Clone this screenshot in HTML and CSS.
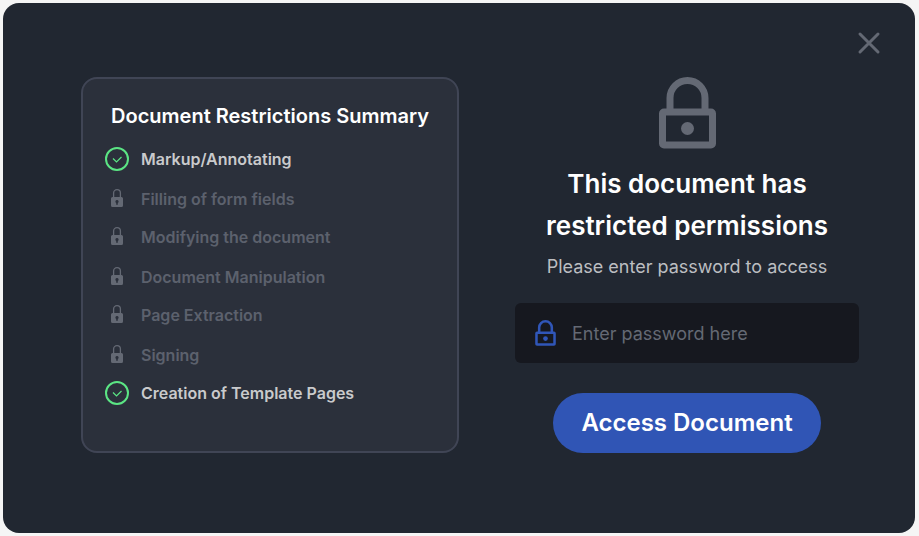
FILE: index.html
```html
<!DOCTYPE html>
<html lang="en">
<head>
<meta charset="utf-8">
<meta name="viewport" content="width=device-width, initial-scale=1">
<title>Document permissions</title>
<link rel="stylesheet" href="styles.css">
</head>
<body>
<svg class="sprite" aria-hidden="true">
    <symbol id="check" viewBox="0 0 24 24">
        <circle cx="12" cy="12" r="11" fill="none" stroke="currentColor" stroke-width="2"/>
        <path d="M8 11.500l3.500 3.500 5-5" fill="none" stroke="currentColor" stroke-width="1.2"/>
    </symbol>
    <symbol id="locked" viewBox="0 0 24 24">
        <path d="M8.600 11V6a3.400 3.400 0 0 1 6.800 0V11" fill="none" stroke="currentColor" stroke-width="1.3"/>
        <path fill="currentColor" fill-rule="evenodd" d="M7.500 10h9a1.500 1.500 0 0 1 1.500 1.500v7a1.500 1.500 0 0 1-1.500 1.500h-9a1.500 1.500 0 0 1-1.500-1.500v-7a1.500 1.500 0 0 1 1.500-1.500zM12 13a1.600 1.600 0 0 0-.8 3v1.700h1.600V16a1.600 1.600 0 0 0-.8-3z"/>
    </symbol>
    <symbol id="padlock" viewBox="0 0 57 72">
        <path d="M11 34V21a17.500 17.500 0 0 1 35 0v13" fill="none" stroke="currentColor" stroke-width="7"/>
        <rect x="3.500" y="35" width="50" height="33" rx="1.500" fill="none" stroke="currentColor" stroke-width="7"/>
        <circle cx="28.500" cy="51.500" r="6.500" fill="currentColor"/>
    </symbol>
</svg>

<div class="modal">
    <button class="close" type="button" aria-label="Close">
        <svg viewBox="0 0 24 24"><path d="M3 3l18 18M21 3L3 21"/></svg>
    </button>

    <section class="summary">
        <h2>Document Restrictions Summary</h2>
        <ul>
            <li class="allowed"><svg><use href="#check"/></svg><span>Markup/Annotating</span></li>
            <li><svg><use href="#locked"/></svg><span>Filling of form fields</span></li>
            <li><svg><use href="#locked"/></svg><span>Modifying the document</span></li>
            <li><svg><use href="#locked"/></svg><span>Document Manipulation</span></li>
            <li><svg><use href="#locked"/></svg><span>Page Extraction</span></li>
            <li><svg><use href="#locked"/></svg><span>Signing</span></li>
            <li class="allowed"><svg><use href="#check"/></svg><span>Creation of Template Pages</span></li>
        </ul>
    </section>

    <form class="access">
        <svg class="lock"><use href="#padlock"/></svg>
        <h1>This document has restricted permissions</h1>
        <p>Please enter password to access</p>
        <label class="field">
            <svg><use href="#padlock"/></svg>
            <input type="password" placeholder="Enter password here" aria-label="Password">
        </label>
        <button class="submit" type="submit">Access Document</button>
    </form>
</div>
</body>
</html>
```
FILE: styles.css
```css
* {
    box-sizing: border-box;
    margin: 0;
    padding: 0;
}

body {
    min-height: 100vh;
    padding: 3px 4px 3px 3px;
    display: flex;
    background: #f5f5f5;
    font-family: Inter, "Liberation Sans", sans-serif;
    color: #fff;
}

.sprite {
    position: absolute;
    width: 0;
    height: 0;
}

.modal {
    position: relative;
    flex: 1;
    display: grid;
    grid-template-columns: minmax(0, 378fr) minmax(0, 344fr);
    gap: 56px;
    align-items: center;
    padding: 74px 56px 80px 78px;
    border-radius: 16px;
    background: #212731;
}

.close {
    position: absolute;
    top: 28px;
    right: 34px;
    width: 24px;
    height: 24px;
    border: none;
    background: none;
    cursor: pointer;
}

.close svg {
    display: block;
    fill: none;
    stroke: #646974;
    stroke-width: 3;
    stroke-linecap: round;
}

.summary {
    align-self: stretch;
    padding: 22px;
    border: 2px solid #404555;
    border-radius: 16px;
    background: #2b303b;
}

.summary h2 {
    margin-bottom: 16px;
    font-size: 20px;
    font-weight: 600;
    line-height: 30px;
    text-align: center;
}

.summary ul {
    list-style: none;
}

.summary li {
    display: flex;
    align-items: center;
    gap: 12px;
    height: 24px;
    margin-bottom: 16px;
    color: #5c616d;
    font-size: 16px;
    font-weight: 600;
}

.summary li:nth-child(even) {
    margin-bottom: 14px;
}

.summary li svg {
    flex: none;
    width: 24px;
    height: 24px;
    color: #646974;
}

.summary .allowed {
    color: #c9cacc;
}

.summary .allowed svg {
    color: #5be584;
}

.access {
    display: flex;
    flex-direction: column;
    align-items: center;
    text-align: center;
}

.access .lock {
    width: 57px;
    height: 72px;
    color: #646974;
}

.access h1 {
    max-width: 300px;
    margin-top: 14px;
    font-size: 26px;
    font-weight: 600;
    line-height: 42px;
}

.access p {
    margin: 6px 0 22px;
    color: #bcbec1;
    font-size: 18px;
    line-height: 28px;
}

.field {
    align-self: stretch;
    display: flex;
    align-items: center;
    gap: 16px;
    height: 60px;
    padding: 0 20px;
    border-radius: 6px;
    background: #16181f;
}

.field svg {
    flex: none;
    width: 21px;
    height: 26px;
    color: #3056b8;
}

.field input {
    flex: 1;
    min-width: 0;
    border: none;
    outline: none;
    background: none;
    color: #fff;
    font-family: inherit;
    font-size: 18px;
}

.field input::placeholder {
    color: #646974;
}

.submit {
    height: 60px;
    margin-top: 30px;
    padding: 0 28px 2px;
    border: none;
    border-radius: 30px;
    background: #3055b5;
    color: #fff;
    font-family: inherit;
    font-size: 24px;
    font-weight: 600;
    cursor: pointer;
}
```
